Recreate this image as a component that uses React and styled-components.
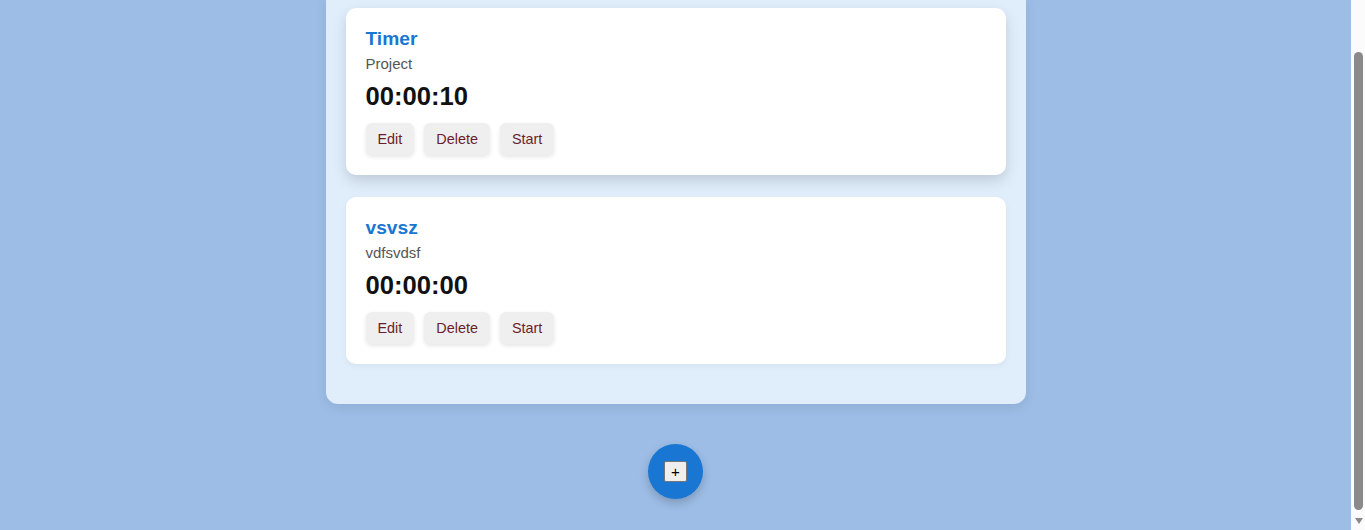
import React, { useLayoutEffect } from "react";
import styled, { createGlobalStyle, css } from "styled-components";

const Global = createGlobalStyle`
  html, body {
    margin: 0;
    padding: 0;
    background: #9dbde6;
    font-family: "Liberation Sans", Arial, sans-serif;
  }
`;

const Page = styled.div`
  display: flex;
  flex-direction: column;
  align-items: center;
  padding: 40px 34px 31px 20px;
`;

const Container = styled.div`
  width: 700px;
  box-sizing: border-box;
  padding: 20px;
  background: #e0eefc;
  border-radius: 12px;
  box-shadow: 0 4px 12px rgba(0, 0, 0, 0.08);
`;

const Card = styled.div`
  background: #ffffff;
  border-radius: 10px;
  padding: 20px;
  margin-bottom: 20px;
  box-shadow: 0 2px 6px rgba(0, 0, 0, 0.05);
  ${(p) =>
    p.$lifted &&
    css`
      transform: translateY(-2px);
      box-shadow: 0 6px 14px rgba(0, 0, 0, 0.15);
    `}
`;

const Title = styled.h3`
  margin: 0 0 5px;
  font-size: 19.2px;
  font-weight: bold;
  color: #1976d2;
`;

const Project = styled.p`
  margin: 0 0 10px;
  font-size: 15px;
  color: #555555;
`;

const Time = styled.div`
  font-size: 25.6px;
  font-weight: bold;
  color: #111111;
  margin-bottom: 12px;
`;

const Actions = styled.div`
  display: flex;
  gap: 10px;
`;

const ActionButton = styled.button`
  font-family: "Liberation Sans", Arial, sans-serif;
  font-size: 14.4px;
  line-height: 16px;
  padding: 8px 12px;
  border: none;
  border-radius: 6px;
  background: #efefef;
  color: #6b1d2a;
  box-shadow: 0 2px 4px rgba(0, 0, 0, 0.1);
  cursor: pointer;
`;

const Fab = styled.div`
  margin-top: 40px;
  width: 55px;
  height: 55px;
  border-radius: 50%;
  background: #1976d2;
  box-shadow: 0 4px 10px rgba(0, 0, 0, 0.2);
  display: flex;
  align-items: center;
  justify-content: center;
`;

const PlusButton = styled.button`
  box-sizing: border-box;
  width: 23px;
  height: 21px;
  padding: 0;
  font-family: "Liberation Sans", Arial, sans-serif;
  font-size: 15px;
  line-height: 1;
  background: #efefef;
  color: #000;
  border: 1px solid #767676;
  border-radius: 2px;
  display: flex;
  align-items: center;
  justify-content: center;
`;

/* window scrollbar, drawn over the page's right edge */
const ScrollRail = styled.div`
  position: fixed;
  top: 0;
  right: 0;
  width: 14px;
  height: 100vh;
  box-sizing: border-box;
  padding: 52px 2px 0 3px;
  background: #fbfbfb;
  display: flex;
  flex-direction: column;
  align-items: center;
`;

const ScrollThumb = styled.div`
  width: 9px;
  height: 458px;
  border-radius: 5px;
  background: #8a8a8a;
`;

const ScrollArrow = styled.div`
  margin-top: 8px;
  width: 0;
  height: 0;
  border-left: 4.5px solid transparent;
  border-right: 4.5px solid transparent;
  border-top: 6px solid #8a8a8a;
`;

const timers = [
  { title: "Timer", project: "Project", time: "00:00:10", lifted: true },
  { title: "vsvsz", project: "vdfsvdsf", time: "00:00:00", lifted: false },
];

export default function App() {
  useLayoutEffect(() => {
    window.scrollTo(0, document.documentElement.scrollHeight);
    const t = setTimeout(
      () => window.scrollTo(0, document.documentElement.scrollHeight),
      0
    );
    return () => clearTimeout(t);
  }, []);

  return (
    <>
      <Global />
      <Page>
        <Container>
          {timers.map((t) => (
            <Card key={t.title} $lifted={t.lifted}>
              <Title>{t.title}</Title>
              <Project>{t.project}</Project>
              <Time>{t.time}</Time>
              <Actions>
                <ActionButton>Edit</ActionButton>
                <ActionButton>Delete</ActionButton>
                <ActionButton>Start</ActionButton>
              </Actions>
            </Card>
          ))}
        </Container>
        <Fab>
          <PlusButton>+</PlusButton>
        </Fab>
      </Page>
      <ScrollRail>
        <ScrollThumb />
        <ScrollArrow />
      </ScrollRail>
    </>
  );
}
